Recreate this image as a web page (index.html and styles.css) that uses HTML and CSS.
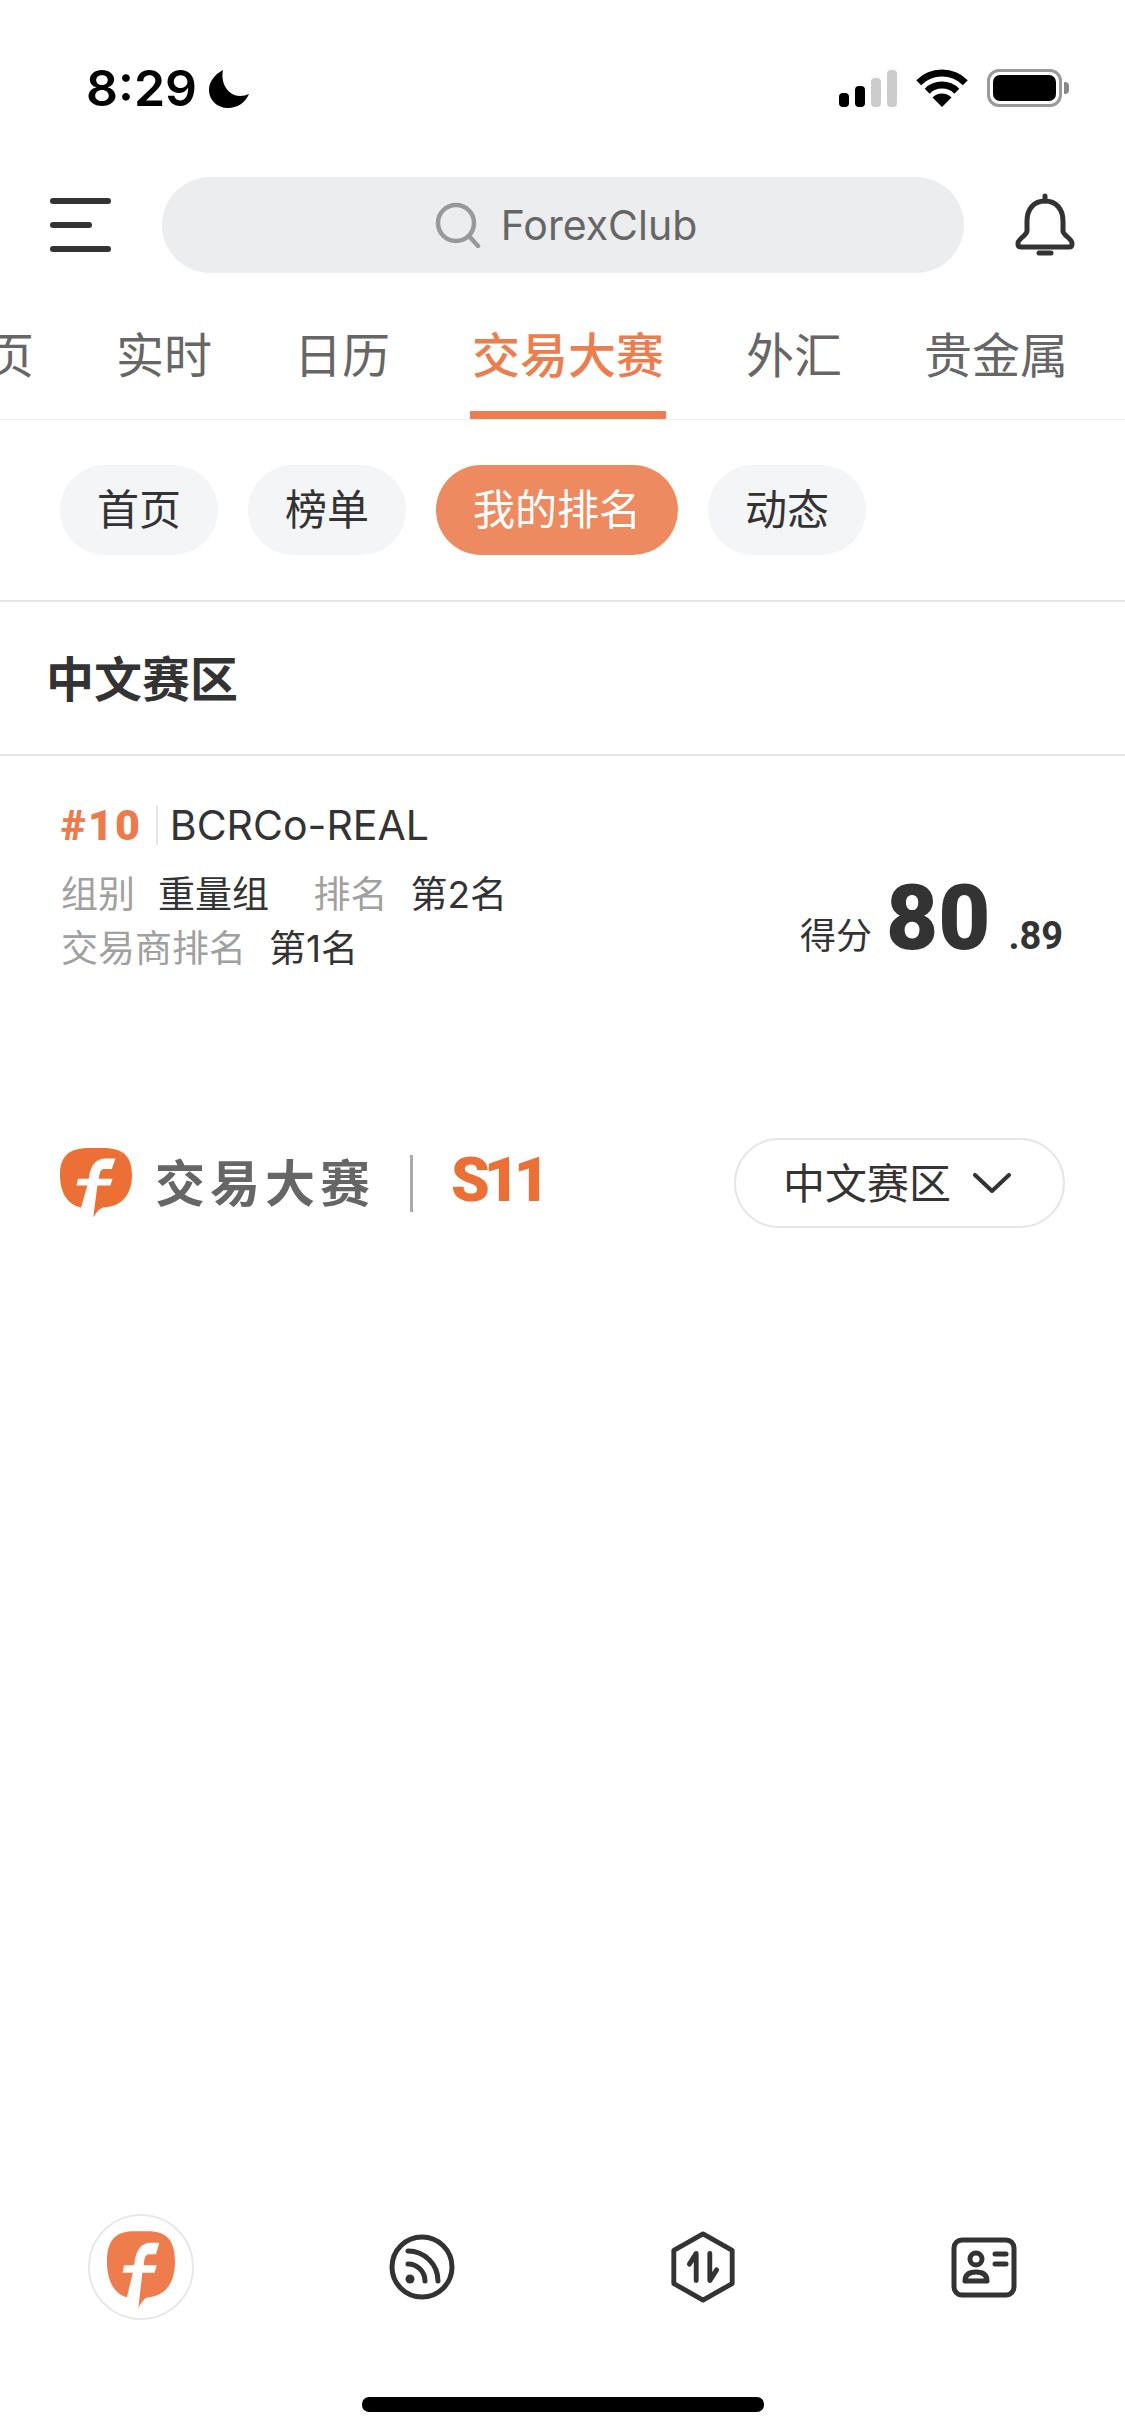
FILE: index.html
```html
<!DOCTYPE html>
<html lang="zh-CN">
<head>
  <meta charset="UTF-8" />
  <meta name="viewport" content="width=device-width, initial-scale=1.0"/>
  <title>交易大赛</title>
  <link rel="stylesheet" href="styles.css">
</head>
<body>
  <div class="page">
    <!-- Status bar -->
    <div class="status">
      <div class="status-left">
        <span class="clock">8:29</span>
        <svg class="moon" viewBox="0 0 40 38"><path d="M14 0C5 5 0 12 0 20c0 10 8 18 19 18 9 0 17-5 21-14-3 1-5 2-9 2C20 26 11 14 14 0z"/></svg>
      </div>
      <div class="status-right">
        <div class="signal">
          <span class="bar bar-1"></span>
          <span class="bar bar-2"></span>
          <span class="bar bar-3"></span>
          <span class="bar bar-4"></span>
        </div>
        <svg class="wifi" viewBox="0 0 52 38">
          <path class="wifi-arc" d="M2.7 13.7a33 33 0 0 1 46.6 0"/>
          <path class="wifi-arc" d="M11.2 22.2a21 21 0 0 1 29.6 0"/>
          <path d="M26 38L16.5 28.5a13.5 13.5 0 0 1 19 0z"/>
        </svg>
        <div class="battery"><span class="battery-fill"></span></div>
        <span class="battery-nub"></span>
      </div>
    </div>

    <!-- Search row -->
    <div class="topbar">
      <div class="menu-icon">
        <span></span>
        <span class="short"></span>
        <span></span>
      </div>
      <div class="search">
        <svg class="search-icon" viewBox="0 0 46 46"><circle cx="21" cy="21" r="18"/><path d="M34 34l9 10"/></svg>
        <span>ForexClub</span>
      </div>
      <svg class="bell" viewBox="0 0 60 64">
        <path d="M30 8C19 8 12 16 12 28v10c0 4-9 8-9 12v1c0 2 1 3 3 3h48c2 0 3-1 3-3v-1c0-4-9-8-9-12V28C48 16 41 8 30 8z"/>
        <path d="M30 8V3"/>
        <path d="M24 60h12"/>
      </svg>
    </div>

    <!-- Tabs -->
    <div class="tabs">
      <div class="tab first">首页</div>
      <div class="tab">实时</div>
      <div class="tab">日历</div>
      <div class="tab active">交易大赛</div>
      <div class="tab">外汇</div>
      <div class="tab">贵金属</div>
    </div>

    <!-- Sub navigation -->
    <div class="pills">
      <div class="pill">首页</div>
      <div class="pill">榜单</div>
      <div class="pill on">我的排名</div>
      <div class="pill">动态</div>
    </div>

    <div class="section-title">中文赛区</div>

    <!-- Rank row -->
    <div class="rank-row">
      <div class="rank-info">
        <div class="rank-head">
          <span class="rank-no">#10</span>
          <span class="rank-name">BCRCo-REAL</span>
        </div>
        <div class="rank-line">
          <span class="label">组别</span><span class="value group">重量组</span>
          <span class="label">排名</span><span class="value">第2名</span>
        </div>
        <div class="rank-line">
          <span class="label">交易商排名</span><span class="value">第1名</span>
        </div>
      </div>
      <div class="score">
        <span class="score-label">得分</span>
        <span class="score-big">80</span>
        <span class="score-small">.89</span>
      </div>
    </div>

    <!-- Contest logo and region select -->
    <div class="contest">
      <div class="contest-logo">
        <svg class="f-logo" viewBox="0 0 100 114" preserveAspectRatio="none">
          <path class="f-blob" d="M40 0H60C88 0 100 14 100 44 100 78 84 96 60 97 54 99 50 106 46 113L29 97C10 92 0 72 0 44 0 14 12 0 40 0Z"/>
          <path class="f-letter" d="M77 17L72 34H62C57 34 55 38 54 50H73L70 61H52L46 114 29 98 38 61H23L25 50H40C42 28 50 17 64 17Z"/>
        </svg>
        <span class="contest-name">交易大赛</span>
        <span class="contest-sep"></span>
        <span class="contest-season">S11</span>
      </div>
      <div class="region">
        <span class="region-name">中文赛区</span>
        <svg class="chevron" viewBox="0 0 38 20"><path d="M2 2l17 16L36 2"/></svg>
      </div>
    </div>

    <!-- Bottom nav -->
    <div class="bottom-nav">
      <div class="nav-item">
        <div class="nav-home">
          <svg class="f-logo small" viewBox="0 0 100 114">
            <path class="f-blob soft" d="M40 0H60C88 0 100 14 100 44 100 78 84 96 60 97 54 99 50 106 46 113L29 97C10 92 0 72 0 44 0 14 12 0 40 0Z"/>
            <path class="f-letter" d="M77 17L72 34H62C57 34 55 38 54 50H73L70 61H52L46 114 29 98 38 61H23L25 50H40C42 28 50 17 64 17Z"/>
          </svg>
        </div>
      </div>
      <div class="nav-item">
        <svg class="nav-icon" viewBox="-36 -36 72 72">
          <circle cx="0" cy="0" r="30"/>
          <path d="M-14 -3a17 17 0 0 1 17 17"/>
          <path d="M-14 -16a30 30 0 0 1 30 30"/>
          <circle class="dot" cx="-12" cy="12" r="4.5"/>
        </svg>
      </div>
      <div class="nav-item">
        <svg class="nav-icon" viewBox="-36 -37 72 74">
          <path d="M0 -34L30 -17V17L0 34L-30 17V-17Z"/>
          <path d="M-7 14V-14L-14 -3"/>
          <path d="M7 -14V14L14 3"/>
        </svg>
      </div>
      <div class="nav-item">
        <svg class="nav-icon" viewBox="-36 -36 72 72">
          <rect x="-30" y="-27" width="60" height="55" rx="8"/>
          <circle cx="-8" cy="-8" r="6"/>
          <path d="M-19 14c0-7 5-9 11-9s11 2 11 9z"/>
          <path d="M11 -13h11"/>
          <path d="M11 -3h11"/>
        </svg>
      </div>
    </div>

    <div class="home-bar"></div>
  </div>
</body>
</html>
```

FILE: styles.css
```css
* { margin: 0; padding: 0; box-sizing: border-box; }
body {
  font-family: "Inter", "Noto Sans CJK SC", sans-serif;
  background-color: #fff;
  color: #333;
}

.page {
  display: flex;
  flex-direction: column;
  width: 1125px;
  height: 2436px;
  overflow: hidden;
}

/* Status bar */
.status {
  display: flex;
  justify-content: space-between;
  height: 177px;
  padding: 69px 56px 0 86px;
}
.status-left { display: flex; gap: 12px; height: 39px; align-items: center; }
.clock { font-size: 50px; font-weight: 600; color: #000; line-height: 39px; }
.moon { width: 40px; height: 38px; fill: #000; }
.status-right { display: flex; height: 38px; align-items: center; }
.signal { display: flex; gap: 6px; align-items: flex-end; height: 37px; margin-right: 19px; }
.bar { width: 10px; border-radius: 4px; background-color: #000; }
.bar-1 { height: 14px; }
.bar-2 { height: 21px; }
.bar-3 { height: 29px; background-color: #ccc; }
.bar-4 { height: 37px; background-color: #ccc; }
.wifi { width: 52px; height: 38px; margin-right: 19px; fill: #000; }
.wifi-arc { fill: none; stroke: #000; stroke-width: 7; }
.battery {
  width: 75px;
  height: 38px;
  padding: 3px;
  border: 3px solid #999;
  border-radius: 12px;
}
.battery-fill { display: block; height: 100%; border-radius: 7px; background-color: #000; }
.battery-nub {
  width: 5px;
  height: 12px;
  margin-left: 2px;
  border-radius: 0 4px 4px 0;
  background-color: #888;
}

/* Search row */
.topbar {
  display: flex;
  align-items: center;
  justify-content: space-between;
  height: 96px;
  padding: 0 50px;
}
.menu-icon { display: flex; flex-direction: column; gap: 18px; width: 61px; }
.menu-icon span { display: block; height: 6px; border-radius: 3px; background-color: #333; }
.menu-icon span.short { width: 42px; }
.search {
  display: flex;
  align-items: center;
  justify-content: center;
  gap: 20px;
  width: 802px;
  height: 96px;
  padding-left: 6px;
  border-radius: 48px;
  background-color: #ecedef;
  font-size: 41px;
  color: #666;
}
.search-icon { width: 46px; height: 46px; fill: none; stroke: #999; stroke-width: 4.5; stroke-linecap: round; }
.bell { width: 60px; height: 64px; fill: none; stroke: #333; stroke-width: 5; stroke-linecap: round; }

/* Tabs */
.tabs {
  display: flex;
  align-items: flex-end;
  gap: 78px;
  height: 147px;
  border-bottom: 1px solid #eee;
}
.tab {
  padding: 0 2px 24px;
  border-bottom: 8px solid transparent;
  font-size: 48px;
  line-height: 62px;
  color: #666;
  white-space: nowrap;
}
.tab.first { margin-left: -64px; }
.tab.active {
  border-bottom-color: #ec7d4e;
  color: #ec7d4e;
  font-weight: 500;
}

/* Pills */
.pills {
  display: flex;
  gap: 30px;
  padding: 45px 60px;
  border-bottom: 2px solid #e6e6e6;
}
.pill {
  padding: 0 37px;
  height: 90px;
  border-radius: 45px;
  background-color: #f4f5f7;
  font-size: 42px;
  line-height: 90px;
}
.pill.on { background-color: #ee8a5f; color: #fff; }

.section-title {
  height: 154px;
  padding-left: 46px;
  border-bottom: 2px solid #e6e6e6;
  font-size: 48px;
  font-weight: 700;
  line-height: 155px;
}

/* Rank row */
.rank-row {
  display: flex;
  justify-content: space-between;
  align-items: flex-end;
  padding: 46px 62px 0 61px;
}
.rank-head { display: flex; align-items: center; height: 46px; margin-bottom: 20px; }
.rank-no {
  padding-right: 14px;
  border-right: 2px solid #e6e6e6;
  font-family: "Roboto", sans-serif;
  font-size: 43px;
  font-weight: 900;
  letter-spacing: 2px;
  line-height: 40px;
  color: #ec7a4a;
}
.rank-name { margin-left: 12px; font-size: 41px; color: #333; }
.rank-line { height: 54px; font-size: 37px; line-height: 54px; white-space: nowrap; }
.label { margin-right: 23px; color: #a0a0a0; }
.value { color: #333; }
.value.group { margin-right: 34px; }
.score { display: flex; align-items: baseline; margin-bottom: 3px; line-height: 74px; }
.score-label { margin-right: 14px; font-size: 36px; color: #333; }
.score-big {
  font-family: "Roboto", sans-serif;
  font-size: 90px;
  font-weight: 900;
  letter-spacing: 0;
}
.score-small {
  margin-left: 18px;
  font-family: "Roboto", sans-serif;
  font-size: 38px;
  font-weight: 700;
}

/* Contest row */
.contest {
  display: flex;
  align-items: center;
  justify-content: space-between;
  margin-top: 162px;
  padding: 0 60px;
}
.contest-logo { display: flex; align-items: center; }
.f-logo { width: 72px; height: 70px; }
.f-logo.small { width: 68px; height: 78px; margin-top: 6px; }
.f-blob { fill: #ec6f35; }
.f-blob.soft { fill: #ef7c4c; }
.f-letter { fill: #fff; }
.contest-name {
  margin-left: 23px;
  margin-bottom: 7px;
  font-size: 50px;
  font-weight: 700;
  letter-spacing: 5px;
  color: #666;
}
.contest-sep { width: 3px; height: 57px; margin: 0 38px 0 35px; background-color: #aaa; }
.contest-season {
  margin-bottom: 7px;
  font-family: "Roboto", sans-serif;
  font-size: 62px;
  font-weight: 900;
  letter-spacing: -6px;
  color: #ec6f35;
}
.region {
  display: flex;
  align-items: center;
  gap: 22px;
  height: 90px;
  padding: 0 52px 0 47px;
  border: 2px solid #e6e6e6;
  border-radius: 45px;
  font-size: 42px;
}
.region-name { margin-bottom: 5px; }
.chevron { width: 38px; height: 20px; fill: none; stroke: #333; stroke-width: 4; stroke-linecap: round; stroke-linejoin: round; }

/* Bottom nav */
.bottom-nav {
  display: grid;
  grid-template-columns: repeat(4, 1fr);
  margin-top: auto;
}
.nav-item { display: flex; align-items: center; justify-content: center; height: 106px; }
.nav-home {
  display: flex;
  align-items: center;
  justify-content: center;
  width: 106px;
  height: 106px;
  border: 2px solid #e8e8e8;
  border-radius: 50%;
}
.nav-icon { width: 72px; height: 72px; fill: none; stroke: #333; stroke-width: 5; stroke-linecap: round; stroke-linejoin: round; }
.nav-icon .dot { fill: #333; stroke: none; }

.home-bar {
  align-self: center;
  width: 402px;
  height: 15px;
  margin: 77px 0 24px;
  border-radius: 7px;
  background-color: #000;
}
```
